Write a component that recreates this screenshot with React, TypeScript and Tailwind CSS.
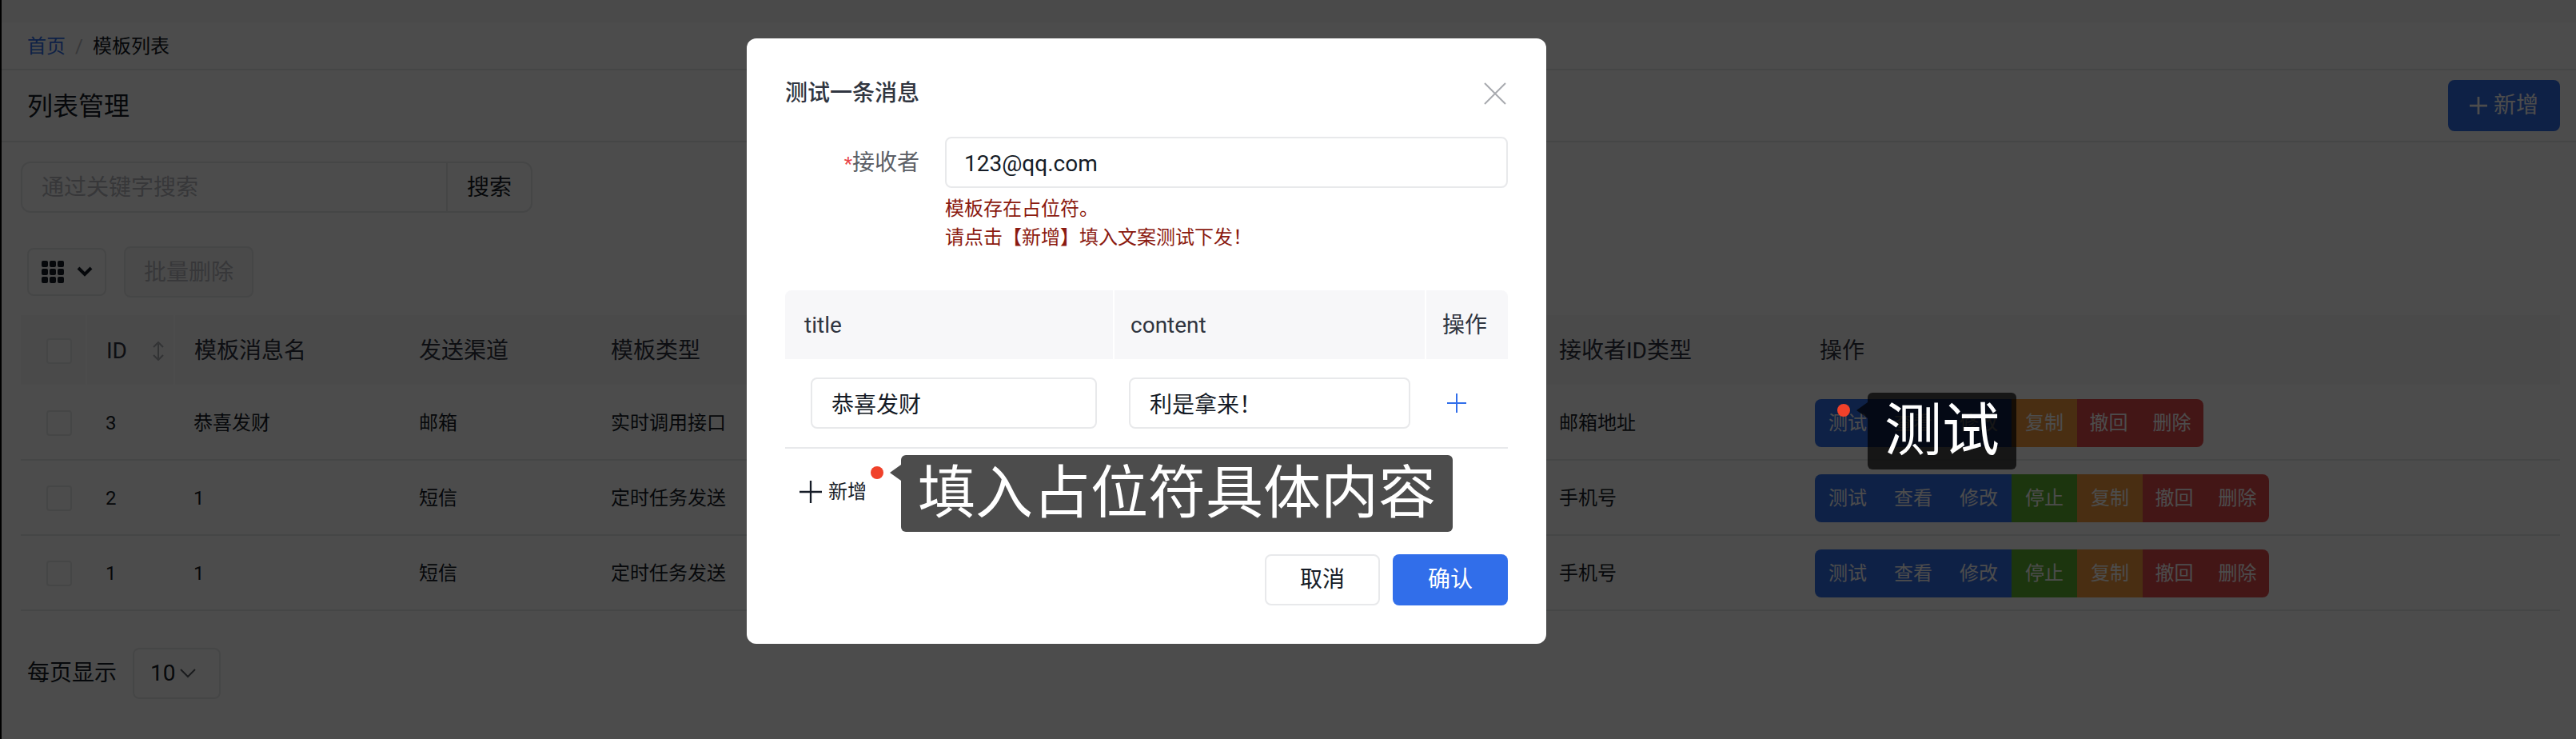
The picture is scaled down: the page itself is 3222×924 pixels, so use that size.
import React, { useState } from 'react';
import clsx from 'clsx';

interface Template {
  id: number;
  name: string;
  channel: string;
  type: string;
  receiverType: string;
  running: boolean;
}

interface Action {
  label: string;
  className: string;
}

const templates: Template[] = [
  { id: 3, name: '恭喜发财', channel: '邮箱', type: '实时调用接口', receiverType: '邮箱地址', running: false },
  { id: 2, name: '1', channel: '短信', type: '定时任务发送', receiverType: '手机号', running: true },
  { id: 1, name: '1', channel: '短信', type: '定时任务发送', receiverType: '手机号', running: true },
];

const actions: Action[] = [
  { label: '测试', className: 'w-[82px] bg-[#316eea]' },
  { label: '查看', className: 'w-[82px] bg-[#316eea]' },
  { label: '修改', className: 'w-[82px] bg-[#316eea]' },
  { label: '停止', className: 'w-[82px] bg-[#5fb330]' },
  { label: '复制', className: 'w-[82px] bg-[#f49b3f]' },
  { label: '撤回', className: 'w-[79px] bg-[#e24a4c]' },
  { label: '删除', className: 'w-[79px] bg-[#e24a4c]' },
];

const PlusIcon = ({ className, strokeWidth = 2 }: { className: string; strokeWidth?: number }) => (
  <svg viewBox="0 0 24 24" className={className} fill="none" stroke="currentColor" strokeWidth={strokeWidth}>
    <path d="M12 0v24M0 12h24" />
  </svg>
);

// 红点 + 气泡说明
const Hint = ({ text, className }: { text: string; className: string }) => (
  <span className={clsx('pointer-events-none absolute z-50 flex items-start', className)}>
    <span className="mt-3.5 size-4 rounded-full bg-[#f0412a]" />
    <svg viewBox="0 0 14 20" className="ml-2 mt-3 h-5 w-3.5 fill-black/70">
      <path d="M14 0 0 10l14 10z" />
    </svg>
    <span className="whitespace-nowrap rounded-md bg-black/70 px-[21px] text-[72px] leading-[96px] text-white">
      {text}
    </span>
  </span>
);

const TemplateTable = () => (
  <table className="mt-[22px] w-full table-fixed border-collapse text-left">
    <colgroup>
      <col className="w-[82px]" />
      <col className="w-[110px]" />
      <col className="w-[282px]" />
      <col className="w-[240px]" />
      <col className="w-[1186px]" />
      <col className="w-[328px]" />
      <col />
    </colgroup>
    <thead>
      <tr className="h-[87px] bg-[#f7f7f9] text-[28px] text-[#303540] [&>th]:pt-0.5 [&>th]:font-normal">
        <th className="border-r-2 border-white pl-8">
          <input type="checkbox" aria-label="全选" className="block size-8 appearance-none rounded-sm border-2 border-[#e8e9eb] bg-white" />
        </th>
        <th className="border-r-2 border-white pl-6">
          <button type="button" className="flex w-full items-center justify-between pr-3">
            ID
            <svg viewBox="0 0 14 24" className="h-6 w-3.5 text-[#a8aaaf]" fill="none" stroke="currentColor" strokeWidth="2">
              <path d="M1 7l6-6 6 6M7 3v18M1 17l6 6 6-6" />
            </svg>
          </button>
        </th>
        <th className="px-6">模板消息名</th>
        <th className="px-6">发送渠道</th>
        <th className="px-6">模板类型</th>
        <th className="px-6">接收者ID类型</th>
        <th className="px-[22px]">操作</th>
      </tr>
    </thead>
    <tbody>
      {templates.map((item) => (
        <tr key={item.id} className="h-[94px] border-b-2 border-[#e8e9eb] text-[24px] text-[#151b26] [&>td]:pt-0.5">
          <td className="pl-8">
            <input type="checkbox" aria-label={`选择 ${item.id}`} className="block size-8 appearance-none rounded-sm border-2 border-[#e8e9eb] bg-white" />
          </td>
          <td className="px-6">{item.id}</td>
          <td className="px-6">{item.name}</td>
          <td className="px-6">{item.channel}</td>
          <td className="px-6">{item.type}</td>
          <td className="px-6">{item.receiverType}</td>
          <td className="pl-4">
            <div className="relative flex w-fit">
              {actions
                .filter((action) => item.running || action.label !== '停止')
                .map((action) => (
                  <button
                    key={action.label}
                    type="button"
                    className={clsx('h-[60px] text-white first:rounded-l-lg last-of-type:rounded-r-lg', action.className)}
                  >
                    {action.label}
                  </button>
                ))}
              {item.id === 3 && <Hint text="测试" className="-top-2 left-7" />}
            </div>
          </td>
        </tr>
      ))}
    </tbody>
  </table>
);

const TestMessageModal = ({ onClose }: { onClose: () => void }) => {
  const [receiver, setReceiver] = useState('123@qq.com');
  const [title, setTitle] = useState('恭喜发财');
  const [content, setContent] = useState('利是拿来！');

  return (
    <div className="fixed inset-0 z-10 flex items-start justify-center bg-black/70 pr-[354px] pt-12">
      <div
        role="dialog"
        aria-labelledby="modal-title"
        className="w-full max-w-[1000px] rounded-xl bg-white p-12 text-[28px] leading-[42px] text-[#151b26]"
      >
        <div className="flex items-center justify-between">
          <h2 id="modal-title" className="font-medium text-[#303540]">
            测试一条消息
          </h2>
          <button type="button" aria-label="关闭" onClick={onClose}>
            <svg viewBox="0 0 30 28" className="h-7 w-[30px] text-[#a8aaaf]" fill="none" stroke="currentColor" strokeWidth="2">
              <path d="M1 1l26 26M27 1 1 27" />
            </svg>
          </button>
        </div>

        <div className="mt-[33px] flex gap-8">
          <label htmlFor="receiver" className="w-[168px] pt-3 text-right text-[#5c5f66]">
            <span className="text-[24px] text-[#e8474a]">*</span>接收者
          </label>
          <div className="flex-1">
            <input
              id="receiver"
              value={receiver}
              onChange={(e) => setReceiver(e.target.value)}
              className="block h-16 w-full rounded-lg border-2 border-[#e8e9eb] px-[22px] pt-0.5"
            />
            <p className="mt-2 text-[24px] leading-9 text-[#8b1a10]">
              模板存在占位符。
              <br />
              请点击【新增】填入文案测试下发！
            </p>
          </div>
        </div>

        <table className="mt-12 w-full table-fixed border-separate border-spacing-0 text-left">
          <colgroup>
            <col className="w-[412px]" />
            <col className="w-[390px]" />
            <col />
          </colgroup>
          <thead>
            <tr className="h-[86px] text-[#303540] [&>th]:bg-[#f7f7f9] [&>th]:pt-0.5 [&>th]:font-normal">
              <th className="rounded-tl-lg border-r-2 border-white pl-6">title</th>
              <th className="border-r-2 border-white pl-5">content</th>
              <th className="rounded-tr-lg pl-5">操作</th>
            </tr>
          </thead>
          <tbody>
            <tr className="h-[112px] [&>td]:border-b-2 [&>td]:border-[#e8e9eb]">
              <td className="pl-8 pr-[22px]">
                <input
                  aria-label="title"
                  value={title}
                  onChange={(e) => setTitle(e.target.value)}
                  className="block h-16 w-full rounded-lg border-2 border-[#e8e9eb] px-6"
                />
              </td>
              <td className="pl-[18px] pr-5">
                <input
                  aria-label="content"
                  value={content}
                  onChange={(e) => setContent(e.target.value)}
                  className="block h-16 w-full rounded-lg border-2 border-[#e8e9eb] px-6"
                />
              </td>
              <td className="pl-[26px]">
                <button type="button" aria-label="添加" className="block">
                  <PlusIcon className="size-6 text-[#316eea]" />
                </button>
              </td>
            </tr>
          </tbody>
        </table>

        <div className="relative mt-8 pl-[18px]">
          <button type="button" className="flex h-11 items-center gap-2 text-[24px]">
            <PlusIcon className="size-7" />
            新增
          </button>
          <Hint text="填入占位符具体内容" className="-top-6 left-[107px]" />
        </div>

        <div className="mt-14 flex justify-end gap-4">
          <button type="button" onClick={onClose} className="h-16 w-36 rounded-lg border-2 border-[#e8e9eb]">
            取消
          </button>
          <button type="button" onClick={onClose} className="h-16 w-36 rounded-lg bg-[#316eea] text-white">
            确认
          </button>
        </div>
      </div>
    </div>
  );
};

const App = () => {
  const [modalOpen, setModalOpen] = useState(true);

  return (
    <div className="min-h-screen border-l-2 border-black bg-white font-['Roboto','Noto_Sans_CJK_SC',sans-serif] text-[28px] text-[#151b26]">
      <div className="h-7 bg-[#f7f7f9]" />
      <nav className="flex h-[60px] items-center border-b-2 border-[#e8e9eb] px-8 pt-0.5 text-[24px]">
        <a href="#" className="text-[#316eea]">
          首页
        </a>
        <span className="px-3 text-[#b8babf]">/</span>
        <span>模板列表</span>
      </nav>
      <header className="flex h-[90px] items-center justify-between border-b-2 border-[#e8e9eb] pl-8 pr-5">
        <h1 className="pt-0.5 text-[32px]">列表管理</h1>
        <button type="button" className="flex h-16 w-[140px] items-center justify-center gap-2 rounded-lg bg-[#316eea] text-white">
          <PlusIcon className="size-[22px]" strokeWidth={3} />
          新增
        </button>
      </header>

      <main className="pl-6 pr-5 pt-6">
        <form className="flex h-16 w-[640px] overflow-hidden rounded-xl border-2 border-[#e8e9eb]">
          <input
            type="search"
            aria-label="通过关键字搜索"
            placeholder="通过关键字搜索"
            className="min-w-0 flex-1 px-6 pt-0.5 placeholder:text-[#b8babf]"
          />
          <button type="button" className="w-[106px] border-l-2 border-[#e8e9eb] pt-0.5">
            搜索
          </button>
        </form>

        <div className="mt-[42px] flex items-center gap-[22px] pl-2">
          <button
            type="button"
            aria-label="自定义列"
            className="flex h-[60px] w-[99px] items-center justify-center gap-4 rounded-lg border-2 border-[#e8e9eb]"
          >
            <svg viewBox="0 0 28 28" className="size-7 fill-current">
              {[0, 10, 20].map((y) => [0, 10, 20].map((x) => <rect key={`${x}-${y}`} x={x} y={y} width="8" height="8" rx="2" />))}
            </svg>
            <svg viewBox="0 0 20 14" className="h-3.5 w-5" fill="none" stroke="currentColor" strokeWidth="4">
              <path d="M2 2l8 8 8-8" />
            </svg>
          </button>
          <button type="button" disabled className="h-16 w-[162px] rounded-lg border-2 border-[#e8e9eb] bg-[#f7f7f9] pt-0.5 text-[#b8babf]">
            批量删除
          </button>
        </div>

        <TemplateTable />

        <div className="mt-[46px] flex items-center gap-5 pl-2">
          <label htmlFor="page-size">每页显示</label>
          <div className="relative">
            <select id="page-size" className="h-16 w-[110px] appearance-none rounded-lg border-2 border-[#e8e9eb] pl-5">
              <option>10</option>
            </select>
            <svg
              viewBox="0 0 20 12"
              className="pointer-events-none absolute right-[31px] top-[26px] h-3 w-5 text-[#5c5f66]"
              fill="none"
              stroke="currentColor"
              strokeWidth="2"
            >
              <path d="M1 1l9 9 9-9" />
            </svg>
          </div>
        </div>
      </main>

      {modalOpen && <TestMessageModal onClose={() => setModalOpen(false)} />}
    </div>
  );
};

export default App;
